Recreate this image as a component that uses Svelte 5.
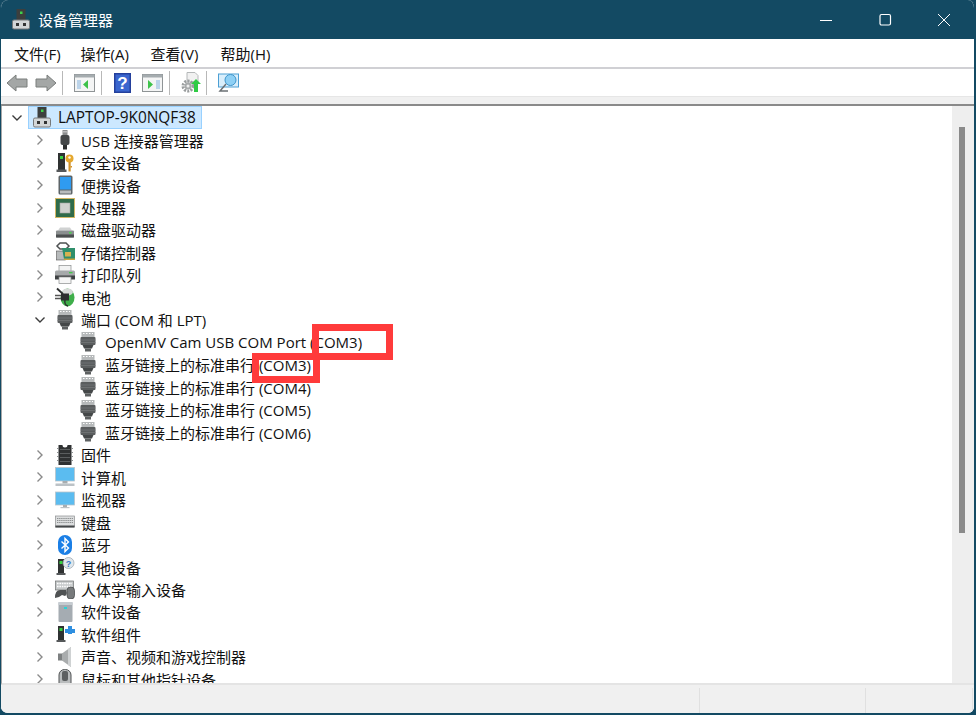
<script>
    const menus = ["文件(F)", "操作(A)", "查看(V)", "帮助(H)"];

    const before = [
        { name: "USB 连接器管理器", icon: "usb" },
        { name: "安全设备", icon: "security" },
        { name: "便携设备", icon: "portable" },
        { name: "处理器", icon: "cpu" },
        { name: "磁盘驱动器", icon: "disk" },
        { name: "存储控制器", icon: "storage" },
        { name: "打印队列", icon: "printer" },
        { name: "电池", icon: "battery" },
    ];

    const ports = [
        "OpenMV Cam USB COM Port (COM3)",
        "蓝牙链接上的标准串行 (COM3)",
        "蓝牙链接上的标准串行 (COM4)",
        "蓝牙链接上的标准串行 (COM5)",
        "蓝牙链接上的标准串行 (COM6)",
    ];

    const after = [
        { name: "固件", icon: "firmware" },
        { name: "计算机", icon: "computer" },
        { name: "监视器", icon: "monitor" },
        { name: "键盘", icon: "keyboard" },
        { name: "蓝牙", icon: "bluetooth" },
        { name: "其他设备", icon: "other" },
        { name: "人体学输入设备", icon: "hid" },
        { name: "软件设备", icon: "softdev" },
        { name: "软件组件", icon: "softcomp" },
        { name: "声音、视频和游戏控制器", icon: "sound" },
        { name: "鼠标和其他指针设备", icon: "mouse" },
    ];
</script>

{#snippet pc()}
    <svg class="pc" width="18" height="21" viewBox="0 0 18 21">
        <rect x="4.500" y="0" width="9" height="11.500" fill="#3c3f3e" />
        <rect x="8" y="2.500" width="2.500" height="2.500" fill="#3fd24a" />
        <rect x=".5" y="11" width="17" height="9" rx="1.500" fill="#d3d6d7" stroke="#77797a" />
        <rect x="4" y="14" width="3" height="3" fill="#333" />
        <rect x="11" y="14" width="3" height="3" fill="#333" />
    </svg>
{/snippet}

{#snippet tower()}
    <path d="M3 2h6v14H3z" fill="#2f3232" />
    <path d="M1.500 16h9v2h-9z" fill="#55585a" />
    <rect x="4.500" y="4" width="3" height="3" fill="#35d23f" />
{/snippet}

{#snippet icon(kind)}
    <svg class="ico" width="20" height="20" viewBox="0 0 20 20">
        {#if kind === "usb"}
            <rect x="7.500" y="0" width="5" height="5" fill="#8b8d8e" />
            <rect x="8.500" y="1" width="1" height="1.500" fill="#eee" />
            <rect x="10.500" y="1" width="1" height="1.500" fill="#eee" />
            <rect x="5.500" y="5" width="9" height="10" rx="2" fill="#444748" />
            <rect x="8" y="15" width="4" height="4.500" fill="#2c2e2f" />
        {:else if kind === "security"}
            <path d="M3 0h7v17H3z" fill="#2f3232" />
            <path d="M1.500 16.500h10V19h-10z" fill="#55585a" />
            <rect x="5" y="3" width="3" height="3" fill="#35d23f" />
            <circle cx="14.500" cy="5.500" r="4" fill="#e5a82f" />
            <circle cx="14.500" cy="4.500" r="1.200" fill="#fff" />
            <path d="M13.500 9h2.200v9.500h-2.200z" fill="#d1922a" />
            <path d="M15.500 13h1.500v1.500h-1.500z" fill="#d1922a" />
        {:else if kind === "portable"}
            <rect x="3.500" y="0.500" width="14" height="19" rx="1.500" fill="#5d6468" />
            <rect x="5" y="2" width="11" height="12.500" fill="#2f9bf0" />
            <rect x="5" y="15.500" width="11" height="3" fill="#b8bcbe" />
        {:else if kind === "cpu"}
            <rect x="0" y="0" width="20" height="20" fill="#d3b766" />
            <rect x="1" y="1" width="18" height="18" fill="#2f6b49" />
            <rect x="5" y="5" width="10" height="10" fill="#cfd1ce" stroke="#a0a4a0" stroke-width=".6" />
        {:else if kind === "disk"}
            <path d="M3 10.500 5 7.500h10l2 3z" fill="#d0d2d2" />
            <rect x="1" y="10.500" width="18" height="7" rx="1" fill="#8a8e8f" />
            <rect x="1" y="14.500" width="18" height="3" fill="#4b4e4f" />
            <rect x="14" y="12" width="2.500" height="1.500" fill="#49d64f" />
        {:else if kind === "storage"}
            <path d="M5 1h6l3 3-3 3H5L2 4z" fill="none" stroke="#4e5152" stroke-width="1.500" />
            <rect x="1.500" y="9" width="9" height="9" fill="#b7babb" stroke="#555" stroke-width=".6" />
            <path d="M7 6h13v11H9z" fill="#2f8f6b" />
            <rect x="10" y="10" width="6" height="4.500" fill="#d6b24f" />
            <rect x="9" y="16.500" width="11" height="1.500" fill="#c4a33e" />
        {:else if kind === "printer"}
            <rect x="4" y="0.500" width="12" height="6" fill="#f2f3f3" stroke="#8a8d8e" stroke-width=".7" />
            <rect x="0" y="5.500" width="20" height="8.500" rx="1.500" fill="#a6a9aa" />
            <rect x="0" y="10.500" width="20" height="4" fill="#3e4142" />
            <rect x="14" y="7" width="3.500" height="1.300" fill="#43c94a" />
            <rect x="4" y="12" width="12" height="6.500" fill="#f6f6f6" stroke="#8a8d8e" stroke-width=".7" />
        {:else if kind === "battery"}
            <ellipse cx="12.500" cy="10.500" rx="7" ry="9" fill="#3fae4a" />
            <ellipse cx="12.500" cy="5" rx="5.500" ry="3.500" fill="#d7dad8" />
            <path d="M2 1.500 8 7" stroke="#2c2e2f" stroke-width="1.800" fill="none" />
            <path d="M6 6.500h8v7H6z" fill="#2c2e2f" />
            <path d="M0 8.500h6M0 11.500h6" stroke="#555" stroke-width="1.500" />
            <path d="M10 13q-1 5 3 6" stroke="#2c2e2f" stroke-width="1.400" fill="none" />
        {:else if kind === "port"}
            <rect x="3.500" y="0" width="13" height="5.500" fill="#b6b9ba" />
            <path d="M5 1.500h1.500M8 1.500h1.500M11 1.500h1.500M14 1.500h1" stroke="#fff" stroke-width="1" />
            <rect x="2.500" y="5" width="15" height="8" rx="1" fill="#5a5d5e" />
            <path d="M2.500 8h15M2.500 10.500h15" stroke="#777a7b" stroke-width=".7" />
            <path d="M4.500 13h11l-1.500 3.500H6z" fill="#444748" />
            <rect x="7" y="16.500" width="6" height="3" fill="#5d6061" />
        {:else if kind === "firmware"}
            <path d="M3.500 0h4a2.500 2.500 0 0 0 5 0h4v20h-13z" fill="#2f3132" />
            <path d="M5 4h10v1H5zM5 8h10v1H5zM5 12h10v1H5zM5 16h10v1H5z" fill="#5b5e5f" />
            <path d="M2 3h2v1H2zM2 7h2v1H2zM2 11h2v1H2zM2 15h2v1H2zM16 3h2v1h-2zM16 7h2v1h-2zM16 11h2v1h-2zM16 15h2v1h-2z" fill="#8c8f90" />
        {:else if kind === "computer"}
            <rect x="0.500" y="0.500" width="19" height="13.500" fill="#5bbcf0" stroke="#b9c4ca" stroke-width=".8" />
            <rect x="7.500" y="14" width="5" height="2.500" fill="#a8adb0" />
            <rect x="0.500" y="16.500" width="19" height="2.500" fill="#bcc2c6" />
        {:else if kind === "monitor"}
            <rect x="0.500" y="2" width="19" height="13" fill="#5bbcf0" stroke="#b9c4ca" stroke-width=".8" />
            <rect x="8" y="15" width="4" height="2" fill="#a8adb0" />
            <rect x="5.500" y="17" width="9" height="1.200" fill="#bcc2c6" />
        {:else if kind === "keyboard"}
            <rect x="0.500" y="4" width="19" height="11" fill="#dcdedf" stroke="#8c8f90" stroke-width=".7" />
            <path d="M2 6.500h16M2 8.500h16M2 10.500h16" stroke="#8d9091" stroke-width="1" stroke-dasharray="1.400 .7" />
            <rect x="0.500" y="13.500" width="19" height="2" fill="#45484a" />
        {:else if kind === "bluetooth"}
            <rect x="3" y="0" width="14" height="20" rx="7" fill="#1b7fe6" />
            <path d="M6.500 6.500l7 6.500-3.500 3.500V3.500L13.500 7l-7 6.500" fill="none" stroke="#fff" stroke-width="1.400" />
        {:else if kind === "other"}
            {@render tower()}
            <circle cx="13.500" cy="6" r="5.500" fill="#dfe6ec" stroke="#9aa3aa" stroke-width=".7" />
            <text x="13.500" y="9.500" class="q">?</text>
        {:else if kind === "hid"}
            <rect x="0.500" y="2" width="18" height="9" fill="#c6c9ca" stroke="#6d7071" stroke-width=".7" />
            <path d="M2 4.500h15M2 7.500h15" stroke="#fff" stroke-width="1.300" stroke-dasharray="1.600 .8" />
            <path d="M0 19q0-8 5-8h6q2 4-1 6l-3-1-3 2z" fill="#4f5253" />
            <rect x="12" y="8" width="7.500" height="12" rx="3.500" fill="#777a7b" stroke="#3f4243" stroke-width=".7" />
        {:else if kind === "softdev"}
            <rect x="3.500" y="0" width="14" height="20" rx="1" fill="#a5acb2" />
            <rect x="3.500" y="0" width="14" height="3" fill="#c6ccd1" />
            <rect x="9" y="5" width="3" height="2" fill="#29d3d8" />
        {:else if kind === "softcomp"}
            {@render tower()}
            <path d="M10 5h3V2h4v3h3v4h-3v1h-4V9h-3z" fill="#2f8fe0" />
        {:else if kind === "sound"}
            <path d="M3 6.500h5v7H3z" fill="#7d8081" />
            <path d="M7 6.500 16 0v20l-9-6.500z" fill="#a9acad" />
            <path d="M13 2l3-2v20l-3-2z" fill="#cfd2d3" />
        {:else if kind === "mouse"}
            <rect x="4" y="0.500" width="12" height="19" rx="5.500" fill="#b9bcbd" stroke="#505354" stroke-width="1" />
            <rect x="7" y="2" width="6" height="10" rx="2" fill="#5d6061" />
        {/if}
    </svg>
{/snippet}

{#snippet chevronRight()}
    <svg class="chev" width="8" height="12" viewBox="0 0 8 12"><path d="M1.500 1.500 6 6l-4.500 4.500" fill="none" stroke="#8a8a8a" stroke-width="1.400" /></svg>
{/snippet}

{#snippet chevronDown()}
    <svg class="chev" width="12" height="8" viewBox="0 0 12 8"><path d="M1.500 1.500 6 6l4.500-4.500" fill="none" stroke="#3c3c3c" stroke-width="1.400" /></svg>
{/snippet}

<div class="window">
    <header class="titlebar">
        <span class="app-icon">{@render pc()}</span>
        <span class="title">设备管理器</span>
        <div class="controls">
            <svg width="14" height="14" viewBox="0 0 14 14"><path d="M1 7.500h12" stroke="#fff" stroke-width="1" /></svg>
            <svg width="14" height="14" viewBox="0 0 14 14"><rect x="2" y="1.500" width="10.500" height="10.500" rx="1.500" fill="none" stroke="#fff" stroke-width="1.200" /></svg>
            <svg width="14" height="14" viewBox="0 0 14 14"><path d="M1 1l12 12M13 1 1 13" stroke="#fff" stroke-width="1" /></svg>
        </div>
    </header>

    <nav class="menubar">
        {#each menus as m}
            <span>{m}</span>
        {/each}
    </nav>

    <div class="toolbar">
        <svg width="22" height="20" viewBox="0 0 22 20"><path d="M1 10 10 2v4h11v8H10v4z" fill="#a4a7a6" stroke="#7b7e7d" /></svg>
        <svg class="fwd" width="22" height="20" viewBox="0 0 22 20"><path d="M21 10 12 2v4H1v8h11v4z" fill="#a4a7a6" stroke="#7b7e7d" /></svg>
        <i class="sep"></i>
        <svg width="22" height="20" viewBox="0 0 22 20"><rect x=".5" y="1.500" width="20" height="17" fill="#f4f5f5" stroke="#8f9496" /><rect x=".5" y="1.500" width="20" height="3" fill="#a5acaf" /><rect x="3" y="7" width="4" height="9" fill="#bcd4ea" /><path d="M14 7v9l-5-4.500z" fill="#3dc24a" /></svg>
        <i class="sep"></i>
        <svg class="help" width="17" height="20" viewBox="0 0 17 20"><rect width="17" height="20" fill="#24409c" /><rect x="1.500" y="1.500" width="14" height="17" fill="#3a66cf" /><text x="8.500" y="15.500" class="h">?</text></svg>
        <svg class="tool2" width="22" height="20" viewBox="0 0 22 20"><rect x=".5" y="1.500" width="20" height="17" fill="#f4f5f5" stroke="#8f9496" /><rect x=".5" y="1.500" width="20" height="3" fill="#a5acaf" /><rect x="14" y="7" width="4" height="9" fill="#bcd4ea" /><path d="M6 7v9l5-4.500z" fill="#3dc24a" /></svg>
        <i class="sep"></i>
        <svg width="20" height="22" viewBox="0 0 20 22">
            <path d="M6 .5h8l3 3V10H6z" fill="#f1f1f1" stroke="#b5b8b9" />
            <circle cx="7" cy="14" r="5" fill="none" stroke="#9a9d9e" stroke-width="3" stroke-dasharray="2 1.200" />
            <circle cx="7" cy="14" r="3.500" fill="#a8abac" />
            <circle cx="7" cy="14" r="1.500" fill="#efefef" />
            <path d="M15 7l5 5h-3v8h-4v-8h-3z" fill="#2fcb45" />
        </svg>
        <i class="sep"></i>
        <svg width="22" height="20" viewBox="0 0 22 20"><rect x=".5" y="1" width="20" height="13" fill="#d9eefb" stroke="#4c9fd4" /><circle cx="12.500" cy="7" r="5.500" fill="#8ed0f5" stroke="#3f96cc" /><path d="M8 11 2 18h8" fill="none" stroke="#6b7074" stroke-width="1.500" /></svg>
    </div>

    <div class="strip"></div>

    <main class="content">
        <div class="tree">
            <div class="row">
                <span class="arrow">{@render chevronDown()}</span>
                <span class="root">{@render pc()}<span>LAPTOP-9K0NQF38</span></span>
            </div>
            {#each before as item}
                <div class="row">
                    <span class="arrow">{@render chevronRight()}</span>
                    {@render icon(item.icon)}
                    <span class="label">{item.name}</span>
                </div>
            {/each}
            <div class="row">
                <span class="arrow">{@render chevronDown()}</span>
                {@render icon("port")}
                <span class="label">端口 (COM 和 LPT)</span>
            </div>
            {#each ports as p}
                <div class="row child">
                    {@render icon("port")}
                    <span class="label">{p}</span>
                </div>
            {/each}
            {#each after as item}
                <div class="row">
                    <span class="arrow">{@render chevronRight()}</span>
                    {@render icon(item.icon)}
                    <span class="label">{item.name}</span>
                </div>
            {/each}
        </div>
        <div class="scrollbar"><div class="thumb"></div></div>
        <div class="mark mark-a"></div>
        <div class="mark mark-b"></div>
    </main>

    <footer class="status">
        <div class="cell wide"></div>
        <div class="cell mid"></div>
        <div class="cell last"></div>
    </footer>
</div>

<style>
    :global(body) {
        background: #134a63;
    }
    .window {
        width: 976px;
        height: 715px;
        box-sizing: border-box;
        display: flex;
        flex-direction: column;
        background: #fff;
        border-left: 1px solid #134a63;
        border-right: 2px solid #134a63;
        border-bottom: 2px solid #134a63;
        border-radius: 8px;
        overflow: hidden;
        font-family: "Open Sans", "Noto Sans CJK SC", sans-serif;
        color: #111;
    }
    .titlebar {
        height: 39px;
        flex: none;
        display: flex;
        align-items: center;
        background: #134a63;
        color: #fff;
        padding-left: 11px;
    }
    .app-icon {
        display: flex;
        margin-right: 8px;
    }
    .title {
        font-size: 15px;
    }
    .controls {
        margin-left: auto;
        display: flex;
        gap: 45px;
        padding-right: 23px;
    }
    .controls svg {
        display: block;
    }
    .menubar {
        height: 28px;
        flex: none;
        display: flex;
        align-items: center;
        gap: 20px;
        padding-left: 13px;
        font-size: 15px;
        border-bottom: 2px solid #d0d0d4;
        box-sizing: content-box;
    }
    .menubar span:not(:first-child) {
        min-width: 50px;
    }
    .toolbar {
        height: 28px;
        flex: none;
        display: flex;
        align-items: center;
        padding-left: 5px;
    }
    .toolbar svg {
        display: block;
    }
    .fwd {
        margin-left: 7px;
    }
    .sep {
        width: 1px;
        height: 24px;
        background: #b8b8b8;
        margin: 0 11px 0 5px;
    }
    .help {
        margin-left: 1px;
    }
    .tool2 {
        margin-left: 11px;
    }
    .h {
        font: bold 17px "Liberation Sans", sans-serif;
        fill: #fff;
        text-anchor: middle;
    }
    .q {
        font: bold 9px "Liberation Sans", sans-serif;
        fill: #3a78c4;
        text-anchor: middle;
    }
    .strip {
        height: 7px;
        flex: none;
        background: #f0f0f0;
        border-bottom: 2px solid #8a8a8a;
        border-top: 1px solid #e6e6e6;
        margin-top: -1px;
    }
    .content {
        flex: 1;
        min-height: 0;
        display: flex;
        position: relative;
        overflow: hidden;
        border-left: 1px solid #a8a8a8;
        border-bottom: 2px solid #e4e4e4;
    }
    .tree {
        flex: 1;
        min-width: 0;
        padding-top: 0.400px;
    }
    .row {
        height: 22.480px;
        display: flex;
        align-items: center;
        font-size: 15px;
        white-space: nowrap;
        padding-left: 5px;
    }
    .arrow {
        width: 20px;
        margin-right: 28px;
        display: flex;
        justify-content: center;
        margin-left: 23px;
    }
    .row:first-child .arrow {
        margin-left: 0;
        margin-right: 1px;
    }
    .row.child {
        padding-left: 76px;
    }
    .ico {
        flex: none;
        margin-left: -23px;
    }
    .row.child .ico {
        margin-left: 0;
    }
    .label {
        margin-left: 6px;
    }
    .row.child .label {
        margin-left: 7px;
    }
    .pc {
        display: block;
    }
    .root {
        display: flex;
        align-items: center;
        gap: 7px;
        height: 21px;
        padding: 0 5px 0 4px;
        background: #cce8ff;
        border: 1px solid #99d1ff;
        font-size: 15.400px;
    }
    .scrollbar {
        width: 22px;
        flex: none;
        background: #eeeeee;
        position: relative;
    }
    .thumb {
        width: 6px;
        height: 406px;
        margin: 21px 0 0 7px;
        background: #8a8a8a;
    }
    .mark {
        position: absolute;
        box-sizing: border-box;
        border: 7px solid #ff3b3b;
    }
    .mark-a {
        left: 310px;
        top: 218px;
        width: 81px;
        height: 36px;
    }
    .mark-b {
        left: 250px;
        top: 247px;
        width: 68px;
        height: 30px;
    }
    .status {
        height: 28px;
        flex: none;
        display: flex;
        background: #f0f0f0;
        padding-top: 3px;
        box-sizing: border-box;
    }
    .cell {
        border-right: 1px solid #e0e0e0;
    }
    .wide {
        width: 698px;
    }
    .mid {
        width: 165px;
    }
    .last {
        width: 106px;
    }
</style>
